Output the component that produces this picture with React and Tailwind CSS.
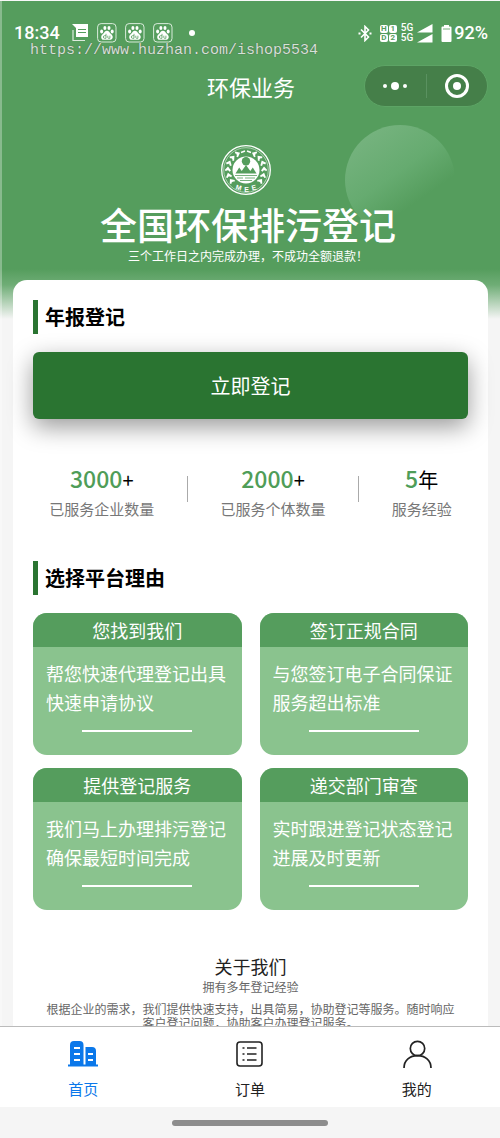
import React from 'react';

const stats = [
  { id: 'company', value: '3000', unit: '+', label: '已服务企业数量' },
  { id: 'personal', value: '2000', unit: '+', label: '已服务个体数量' },
  { id: 'years', value: '5', unit: '年', label: '服务经验' },
];

const reasons = [
  { title: '您找到我们', text: '帮您快速代理登记出具快速申请协议' },
  { title: '签订正规合同', text: '与您签订电子合同保证服务超出标准' },
  { title: '提供登记服务', text: '我们马上办理排污登记确保最短时间完成' },
  { title: '递交部门审查', text: '实时跟进登记状态登记进展及时更新' },
];

const NoteIcon = () => (
  <svg width="17" height="18" viewBox="0 0 17 18">
    <path d="M0 0h16v13H4V4z" fill="#fff" />
    <path d="M1 6v10.5h12" fill="none" stroke="#fff" strokeWidth="1.2" opacity="0.8" />
    <path d="M6 5.5h8M6 8.5h8" stroke="#559d5d" strokeWidth="1" />
  </svg>
);

const PawIcon = () => (
  <svg width="20" height="20" viewBox="0 0 20 20" fill="#fff">
    <rect x="0.6" y="0.6" width="18.4" height="18.4" rx="3.5" fill="none" stroke="#d9ecdb" />
    <ellipse cx="4.6" cy="8.6" rx="1.5" ry="2" />
    <ellipse cx="7.9" cy="5" rx="1.5" ry="2.1" />
    <ellipse cx="12" cy="5" rx="1.5" ry="2.1" />
    <ellipse cx="15.2" cy="8.6" rx="1.5" ry="2" />
    <path d="M9.9 7.8c2 0 2.6 1.8 3.8 3 1.4 1.2 2.2 2 2 3.7-.3 2-2 2.5-3.4 2.3-1.5-.2-3.3-.2-4.8 0-1.5.2-3.1-.4-3.3-2.4-.1-1.6.8-2.5 2-3.6s1.8-3 3.7-3z" />
    <path d="M9 10.8v4.5H7.6a1.2 1.2 0 0 1 0-2.6H9M10.8 12.7v1.8c0 .6.3.8.8.8h1.3v-2.6" fill="none" stroke="#559d5d" strokeWidth="0.8" />
  </svg>
);

const BluetoothIcon = () => (
  <svg width="14" height="17" viewBox="0 0 14 17" fill="none" stroke="#fff" strokeWidth="1.6">
    <path d="M3 4.5l7.5 7.5L7 15.5V1.5L10.5 5 3 12.5" />
    <path d="M0.5 8.5h2M11.5 8.5h2" strokeWidth="2" />
  </svg>
);

const SignalIcon = () => (
  <svg width="16" height="19" viewBox="0 0 16 19" fill="#fff">
    <path d="M15.5 0v8.5H0zM15.5 10v8.5H0z" />
  </svg>
);

const BatteryIcon = () => (
  <svg width="11" height="17" viewBox="0 0 11 17" fill="#fff">
    <path d="M3 0h5v1.5h1.5a1 1 0 0 1 1 1V16a1 1 0 0 1-1 1h-8a1 1 0 0 1-1-1V2.5a1 1 0 0 1 1-1H3z" />
    <path d="M2 4h7" stroke="#559d5d" strokeWidth="0.8" />
  </svg>
);

const leafAngles = [35, 55, 75, 95, 115, 135];

const EmblemIcon = () => (
  <svg width="52" height="52" viewBox="0 0 52 52" role="img" aria-label="MEE">
    <circle cx="26" cy="26" r="24.3" fill="none" stroke="#fff" strokeWidth="1.3" />
    <circle cx="26" cy="26" r="22.3" fill="none" stroke="#fff" strokeWidth="0.5" />
    <circle cx="26" cy="26" r="13.5" fill="#fff" />
    <circle cx="26" cy="17.3" r="4.2" fill="#559d5d" />
    <path d="M15.5 29.5l3.7-6 2.5 3.5 4.3-6 4.3 6 2.5-3.5 3.7 6z" fill="#559d5d" />
    <path d="M15 31.5h22M17 34h6m2 0h10M20 36.5h12" stroke="#559d5d" strokeWidth="0.8" />
    {leafAngles.map((angle) => (
      <g key={angle} fill="none" stroke="#fff" strokeWidth="1.8">
        <path d="M28.5 5.5l-3 2.3 3 2.6M28 8h-1" transform={`rotate(${angle - 10} 26 26)`} />
        <path d="M23.5 5.5l3 2.3-3 2.6M24 8h1" transform={`rotate(${10 - angle} 26 26)`} />
      </g>
    ))}
    <path d="M21 8.5l4-1.5M27 7l4 1.5" stroke="#fff" strokeWidth="1.5" />
    <g fill="#fff" fontFamily="Liberation Sans, sans-serif" fontSize="7" fontWeight="700" textAnchor="middle">
      <text x="18.5" y="46" transform="rotate(14 18.5 44)">M</text>
      <text x="26.5" y="47.5">E</text>
      <text x="34" y="46" transform="rotate(-14 34 44)">E</text>
    </g>
  </svg>
);

const HomeIcon = () => (
  <svg width="32" height="30" viewBox="0 0 32 30">
    <path d="M3 27V6a4 4 0 0 1 4-4h5.5a4 4 0 0 1 4 4v21zM18.5 27V8H25a4 4 0 0 1 4 4v15z" fill="#0b78ea" />
    <path d="M1 26.5h30" stroke="#0b78ea" strokeWidth="2" />
    <path d="M7 9h6M7 15h6M7 21h6M21 15h5M21 21h5" stroke="#fff" strokeWidth="1.8" />
  </svg>
);

const OrderIcon = () => (
  <svg width="32" height="30" viewBox="0 0 32 30" fill="none" stroke="#222" strokeWidth="1.6">
    <rect x="3" y="3" width="25" height="24" rx="3" />
    <path d="M13 9h9.5M13 15h9.5M13 21h9.5" />
    <path d="M8.5 9h2M8.5 15h2M8.5 21h2" />
  </svg>
);

const UserIcon = () => (
  <svg width="32" height="30" viewBox="0 0 32 30" fill="none" stroke="#222" strokeWidth="1.7">
    <circle cx="16.5" cy="9.5" r="7.2" />
    <path d="M3 29C3 21 9 16.7 16.5 16.7S30 21 30 29" />
  </svg>
);

const tabs = [
  { label: '首页', Icon: HomeIcon, active: true },
  { label: '订单', Icon: OrderIcon, active: false },
  { label: '我的', Icon: UserIcon, active: false },
];

const StatusBar = () => (
  <div className="relative flex h-16 items-center justify-between px-3 font-[Roboto,sans-serif] text-white">
    <div className="flex items-center">
      <span className="text-lg font-medium">18:34</span>
      <div className="ml-3 flex items-center gap-2">
        <NoteIcon />
        <PawIcon />
        <PawIcon />
        <PawIcon />
      </div>
      <span className="ml-4 h-1.5 w-1.5 rounded-full bg-white" />
    </div>
    <div className="flex items-center gap-1">
      <BluetoothIcon />
      <div className="ml-1 grid grid-cols-2 gap-px text-center text-[8px] font-bold leading-2 text-[#559d5d]">
        <span className="w-2 rounded-xs bg-white">H</span>
        <span className="w-2 rounded-xs bg-white">1</span>
        <span className="w-2 rounded-xs bg-white">D</span>
        <span className="w-2 rounded-xs bg-white">2</span>
      </div>
      <div className="text-[10px] font-medium leading-[10px]">
        <div>5G</div>
        <div>5G</div>
      </div>
      <SignalIcon />
      <div className="ml-1 flex items-center gap-0.5">
        <BatteryIcon />
        <span className="text-lg font-medium">92%</span>
      </div>
    </div>
    <span className="absolute left-7 top-10 font-['Liberation_Mono',monospace] text-[15px] leading-5 text-[#d5e2d6] [text-shadow:0_0_1px_#444]">
      https://www.huzhan.com/ishop5534
    </span>
  </div>
);

const NavBar = () => (
  <div className="grid grid-cols-[1fr_auto_1fr] items-center px-3 text-white">
    <h1 className="col-start-2 text-[22px]">环保业务</h1>
    <div className="flex h-[42px] w-[124px] items-center justify-self-end rounded-full border border-[#5da465] bg-[#457f49]">
      <button type="button" aria-label="更多" className="flex flex-1 items-center justify-center gap-1">
        <span className="h-1 w-1 rounded-full bg-white" />
        <span className="h-2 w-2 rounded-full bg-white" />
        <span className="h-1 w-1 rounded-full bg-white" />
      </button>
      <span className="h-6 w-px bg-[#5a9160]" />
      <button type="button" aria-label="关闭" className="flex flex-1 items-center justify-center">
        <span className="flex h-6 w-6 items-center justify-center rounded-full border-3 border-white">
          <span className="h-2 w-2 rounded-full bg-white" />
        </span>
      </button>
    </div>
  </div>
);

const Hero = () => (
  <div className="relative flex flex-col items-center pr-1.5 pt-[37px] text-white">
    <div className="absolute right-[45px] top-[18px] h-[110px] w-[110px] rounded-full bg-[linear-gradient(145deg,#74b27d_15%,#66ab70_45%,#559d5d00_68%)]" />
    <div className="relative pr-1">
      <EmblemIcon />
    </div>
    <h2 className="relative mt-1 text-[37px] font-medium leading-12">全国环保排污登记</h2>
    <p className="relative text-xs leading-4">三个工作日之内完成办理，不成功全额退款！</p>
  </div>
);

const SectionTitle = ({ children }) => (
  <h3 className="flex h-[34px] items-center border-l-5 border-[#2a7431] pl-[7px] text-xl font-bold text-black">
    {children}
  </h3>
);

const ReasonCard = ({ title, text }) => (
  <div className="overflow-hidden rounded-[14px] bg-[#8ac38e] text-lg text-white">
    <h4 className="bg-[#559d5d] text-center leading-[34px]">{title}</h4>
    <p className="mt-3 px-[13px] leading-[29px]">{text}</p>
    <div className="mx-auto mb-[23px] mt-[13px] h-0.5 w-[110px] bg-white" />
  </div>
);

export default function App() {
  return (
    <div className="flex h-screen flex-col bg-[#f5f5f5] font-['Noto_Sans_CJK_SC',sans-serif]">
      <main className="flex-1 overflow-hidden border-l-2 border-t border-white/30 bg-[linear-gradient(#559d5d_268px,#6fad76_284px,#f5f5f5_318px)]">
        <StatusBar />
        <NavBar />
        <Hero />
        <div className="ml-[11px] mr-3 mt-4 rounded-[14px] bg-white px-5 pb-10 pt-5">
          <SectionTitle>年报登记</SectionTitle>
          <button
            type="button"
            className="mt-[18px] h-[67px] w-full rounded-md bg-[#2a7431] text-xl text-white shadow-[0_8px_24px_#00000066]"
          >
            立即登记
          </button>

          <div className="mt-[43px] flex items-center justify-around">
            {stats.map((stat, index) => (
              <React.Fragment key={stat.id}>
                {index > 0 && <span className="mb-1.5 h-[26px] w-px bg-[#aaa]" />}
                <div className="text-center">
                  <div className="text-xl leading-8 text-black">
                    <span className="text-[23px] font-medium leading-8 text-[#4f9d58]">{stat.value}</span>
                    {stat.unit}
                  </div>
                  <div className="text-[15px] leading-[26px] text-[#777]">{stat.label}</div>
                </div>
              </React.Fragment>
            ))}
          </div>

          <div className="mt-[39px]">
            <SectionTitle>选择平台理由</SectionTitle>
          </div>
          <div className="mt-[18px] grid grid-cols-2 gap-x-[18px] gap-y-[13px]">
            {reasons.map((reason) => (
              <ReasonCard key={reason.title} title={reason.title} text={reason.text} />
            ))}
          </div>

          <section className="mt-[42px] text-center text-xs text-[#666]">
            <h3 className="text-lg text-[#222]">关于我们</h3>
            <p className="leading-[14px]">拥有多年登记经验</p>
            <p className="mt-2 leading-[14px]">
              根据企业的需求，我们提供快速支持，出具简易，协助登记等服务。随时响应
              <br />
              客户登记问题，协助客户办理登记服务。
            </p>
          </section>
        </div>
      </main>

      <nav className="grid shrink-0 grid-cols-3 border-t border-[#bbb] bg-white">
        {tabs.map(({ label, Icon, active }) => (
          <button
            key={label}
            type="button"
            className={`flex h-20 flex-col items-center pt-3 text-[15px] ${active ? 'text-[#0b78ea]' : 'text-[#222]'}`}
          >
            <Icon />
            <span className="mt-2 leading-6">{label}</span>
          </button>
        ))}
      </nav>
      <div className="flex h-[31px] shrink-0 items-center justify-center">
        <span className="h-1.5 w-[156px] rounded-full bg-[#8d8d8d]" />
      </div>
    </div>
  );
}
